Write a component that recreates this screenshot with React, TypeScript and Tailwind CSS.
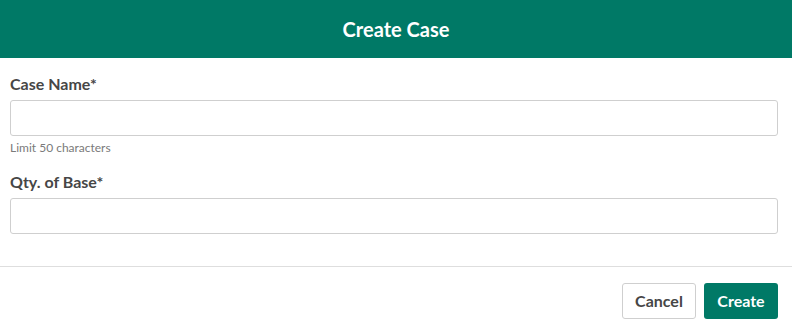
export default function App() {
  return (
    <div className="w-[792px] h-[333px] bg-white font-['Lato','Liberation_Sans',sans-serif] text-[#464646]">
      {/* Header */}
      <div className="h-[58px] bg-[#007966] flex items-center justify-center">
        <h1 className="text-[20px] font-bold text-white">Create Case</h1>
      </div>

      {/* Form */}
      <div className="pl-[10px] pr-[14px] pt-[16px]">
        <label className="block text-[16px] leading-[20px] font-bold mb-[6px]">Case Name*</label>
        <input
          type="text"
          className="block w-full h-[36px] border border-[#cfcfcf] rounded-[3px] px-2 outline-none"
        />
        <p className="text-[12px] leading-[14px] text-[#7a7a7a] mt-[5px]">Limit 50 characters</p>

        <label className="block text-[16px] leading-[20px] font-bold mt-[17px] mb-[6px]">Qty. of Base*</label>
        <input
          type="text"
          className="block w-full h-[36px] border border-[#cfcfcf] rounded-[3px] px-2 outline-none"
        />
      </div>

      {/* Footer */}
      <div className="mt-[32px] border-t border-[#dedede] pt-[16px] pr-[14px] flex justify-end gap-[8px]">
        <button className="w-[74px] h-[36px] border border-[#cfcfcf] rounded-[3px] bg-white text-[16px] font-bold text-[#464646]">
          Cancel
        </button>
        <button className="w-[74px] h-[36px] rounded-[3px] bg-[#007966] text-[16px] font-bold text-white">
          Create
        </button>
      </div>
    </div>
  );
}
